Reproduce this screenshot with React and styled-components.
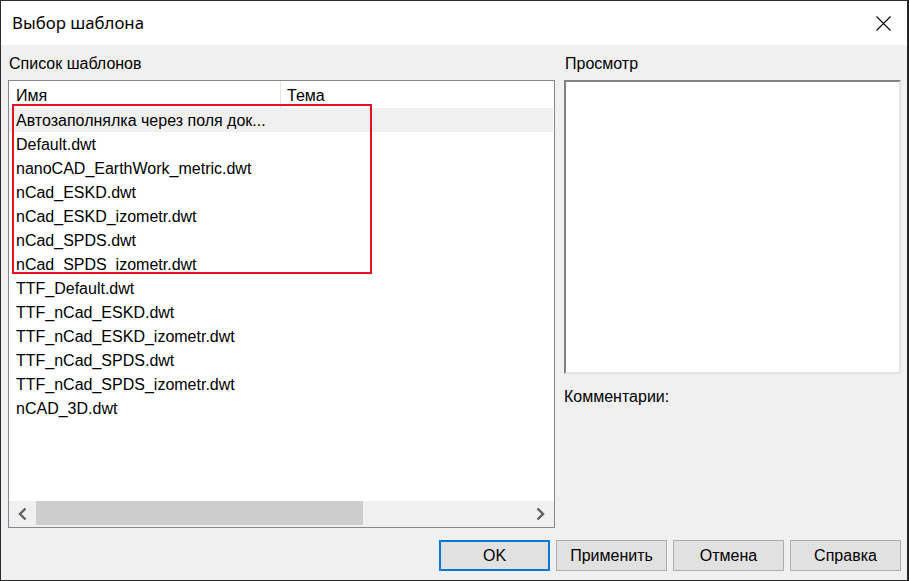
import React from "react";
import styled, { createGlobalStyle } from "styled-components";

const GlobalStyle = createGlobalStyle`
    html, body {
        margin: 0;
        padding: 0;
        background: #1f1f1f;
    }
    * {
        box-sizing: border-box;
    }
`

const templates = [
    "Автозаполнялка через поля док...",
    "Default.dwt",
    "nanoCAD_EarthWork_metric.dwt",
    "nCad_ESKD.dwt",
    "nCad_ESKD_izometr.dwt",
    "nCad_SPDS.dwt",
    "nCad_SPDS_izometr.dwt",
    "TTF_Default.dwt",
    "TTF_nCad_ESKD.dwt",
    "TTF_nCad_ESKD_izometr.dwt",
    "TTF_nCad_SPDS.dwt",
    "TTF_nCad_SPDS_izometr.dwt",
    "nCAD_3D.dwt",
];

export default function App(){
    const [selected, setSelected] = React.useState(0);

    return (
        <>
            <GlobalStyle />
            <Janela>
                <BarraTitulo>
                    <Titulo>Выбор шаблона</Titulo>
                    <BotaoFechar aria-label="close">
                        <svg width="15" height="15" viewBox="0 0 15 15">
                            <path d="M0.5 0.5 L14.5 14.5 M14.5 0.5 L0.5 14.5" stroke="#000" strokeWidth="1.1" fill="none" />
                        </svg>
                    </BotaoFechar>
                </BarraTitulo>

                <Corpo>
                    <Principal>
                        <Coluna>
                            <Rotulo>Список шаблонов</Rotulo>
                            <Lista>
                                <Cabecalho>
                                    <ColunaCab width={272} divider>Имя</ColunaCab>
                                    <ColunaCab>Тема</ColunaCab>
                                </Cabecalho>
                                <Linhas>
                                    {templates.map((t, i) => (
                                        <Linha key={t} selected={i === selected} onClick={() => setSelected(i)}>
                                            {t}
                                        </Linha>
                                    ))}
                                </Linhas>
                                <BarraRolagem>
                                    <Seta>
                                        <svg width="9" height="14" viewBox="0 0 9 14">
                                            <path d="M7.5 1.5 L2 7 L7.5 12.5" stroke="#606060" strokeWidth="2.4" fill="none" />
                                        </svg>
                                    </Seta>
                                    <Trilho>
                                        <Polegar />
                                    </Trilho>
                                    <Seta>
                                        <svg width="9" height="14" viewBox="0 0 9 14">
                                            <path d="M1.5 1.5 L7 7 L1.5 12.5" stroke="#606060" strokeWidth="2.4" fill="none" />
                                        </svg>
                                    </Seta>
                                </BarraRolagem>
                                <Destaque />
                            </Lista>
                        </Coluna>

                        <Coluna>
                            <Rotulo>Просмотр</Rotulo>
                            <Previa />
                            <Comentario>Комментарии:</Comentario>
                        </Coluna>
                    </Principal>

                    <Rodape>
                        <Botao primary>OK</Botao>
                        <Botao>Применить</Botao>
                        <Botao>Отмена</Botao>
                        <Botao>Справка</Botao>
                    </Rodape>
                </Corpo>
            </Janela>
        </>
    )
}

const Janela = styled.div`
    width: 908px;
    height: 581px;
    border: 1px solid #2b2b2b;
    background: #f0f0f0;
    display: flex;
    flex-direction: column;
    font-family: "Liberation Sans", Arial, sans-serif;
    color: #000;
`

const BarraTitulo = styled.div`
    height: 44px;
    background: #ffffff;
    display: flex;
    align-items: center;
    justify-content: space-between;
    padding-left: 11px;
`

const Titulo = styled.div`
    font-family: "Noto Sans", "Open Sans", sans-serif;
    font-size: 16.8px;
    line-height: 20px;
    margin-top: -1px;
`

const BotaoFechar = styled.div`
    width: 46px;
    height: 44px;
    display: flex;
    align-items: center;
    justify-content: flex-start;
    padding-left: 15px;
`

const Corpo = styled.div`
    flex: 1;
    display: flex;
    flex-direction: column;
    padding: 8px 6px 9px 7px;
`

const Principal = styled.div`
    display: grid;
    grid-template-columns: 547px 337px;
    column-gap: 9px;
`

const Coluna = styled.div`
    display: flex;
    flex-direction: column;
`

const Rotulo = styled.div`
    height: 27px;
    font-size: 16px;
    line-height: 20px;
    padding-top: 1px;
    padding-left: 1px;
`

const Lista = styled.div`
    position: relative;
    height: 448px;
    border: 1px solid #828790;
    background: #ffffff;
    display: flex;
    flex-direction: column;
`

const Cabecalho = styled.div`
    height: 27px;
    display: flex;
`

const ColunaCab = styled.div`
    width: ${(props) => props.width ? props.width + 'px' : 'auto'};
    flex: ${(props) => props.width ? 'none' : '1'};
    font-size: 16px;
    line-height: 25px;
    padding-top: 2px;
    padding-left: ${(props) => props.width ? '7px' : '6px'};
    border-right: ${(props) => props.divider ? '1px solid #e5e5e5' : 'none'};
`

const Linhas = styled.div`
    flex: 1;
    display: flex;
    flex-direction: column;
`

const Linha = styled.div`
    height: 24px;
    line-height: 22px;
    padding-top: 2px;
    font-size: 16px;
    padding-left: 7px;
    margin-right: 1px;
    white-space: nowrap;
    background: ${(props) => props.selected ? '#f0f0f0' : 'transparent'};
    cursor: default;
`

const BarraRolagem = styled.div`
    height: 26px;
    display: flex;
    background: #f0f0f0;
`

const Seta = styled.div`
    width: 27px;
    display: flex;
    align-items: center;
    justify-content: center;
`

const Trilho = styled.div`
    flex: 1;
    display: flex;
`

const Polegar = styled.div`
    width: 327px;
    height: 24px;
    background: #cdcdcd;
`

const Destaque = styled.div`
    position: absolute;
    left: 3px;
    top: 23px;
    width: 360px;
    height: 170px;
    border: 2px solid #e81123;
    pointer-events: none;
`

const Previa = styled.div`
    height: 294px;
    background: #ffffff;
    border-top: 2px solid #828282;
    border-left: 2px solid #828282;
    border-right: 2px solid #e3e3e3;
    border-bottom: 2px solid #e3e3e3;
`

const Comentario = styled.div`
    margin-top: 12px;
    font-size: 16px;
    line-height: 20px;
    padding-top: 1px;
`

const Rodape = styled.div`
    margin-top: 12px;
    display: flex;
    justify-content: flex-end;
    gap: 6px;
`

const Botao = styled.button`
    width: 111px;
    height: 31px;
    background: #e1e1e1;
    border: ${(props) => props.primary ? '2px solid #0078d7' : '1px solid #adadad'};
    border-radius: 0;
    padding: 0;
    font-family: "Liberation Sans", Arial, sans-serif;
    font-size: 16px;
    color: #000;
`
